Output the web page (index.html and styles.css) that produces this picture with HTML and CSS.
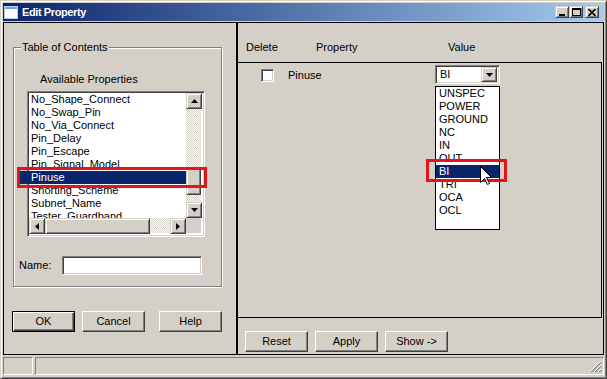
FILE: index.html
```html
<!DOCTYPE html>
<html lang="en">
<head>
    <meta charset="UTF-8">
    <title>Edit Property</title>
    <link rel="stylesheet" href="styles.css">
</head>
<body>
<div class="window">
    <div class="titlebar">
        <svg class="app-icon" width="14" height="13" viewBox="0 0 14 13">
            <rect x="0" y="0" width="14" height="13" fill="#fff"/>
            <rect x="0" y="0" width="14" height="3" fill="#7aa3e0"/>
            <rect x="0.5" y="0.5" width="13" height="12" fill="none" stroke="#b8cdf0"/>
        </svg>
        <span class="title">Edit Property</span>
        <div class="caption-buttons">
            <span class="cap-btn"><svg width="8" height="7" viewBox="0 0 8 7"><rect x="1" y="5" width="6" height="2" fill="#000"/></svg></span>
            <span class="cap-btn"><svg width="9" height="8" viewBox="0 0 9 8"><rect x="0.5" y="0.5" width="8" height="7" fill="none" stroke="#000"/><rect x="0" y="0" width="9" height="2" fill="#000"/></svg></span>
            <span class="cap-btn close"><svg width="8" height="7" viewBox="0 0 8 7"><path d="M0.5 0 L7.5 7 M7.5 0 L0.5 7" stroke="#000" stroke-width="1.6"/></svg></span>
        </div>
    </div>

    <div class="client">
        <div class="pane pane-left">
            <div class="group">
                <span class="group-title">Table of Contents</span>
                <div class="avail-label">Available Properties</div>
                <div class="listbox">
                    <div class="list-items">
                        <div class="item">No_Shape_Connect</div>
                        <div class="item">No_Swap_Pin</div>
                        <div class="item">No_Via_Connect</div>
                        <div class="item">Pin_Delay</div>
                        <div class="item">Pin_Escape</div>
                        <div class="item">Pin_Signal_Model</div>
                        <div class="item selected">Pinuse</div>
                        <div class="item">Shorting_Scheme</div>
                        <div class="item">Subnet_Name</div>
                        <div class="item">Tester_Guardband</div>
                    </div>
                    <div class="vscroll">
                        <span class="sb-btn"><svg width="7" height="4" viewBox="0 0 7 4"><polygon points="0,4 3.5,0 7,4" fill="#000"/></svg></span>
                        <div class="sb-track"><span class="sb-thumb v-thumb"></span></div>
                        <span class="sb-btn"><svg width="7" height="4" viewBox="0 0 7 4"><polygon points="0,0 7,0 3.5,4" fill="#000"/></svg></span>
                    </div>
                    <div class="hscroll">
                        <span class="sb-btn"><svg width="4" height="7" viewBox="0 0 4 7"><polygon points="4,0 4,7 0,3.5" fill="#000"/></svg></span>
                        <div class="sb-track"><span class="sb-thumb h-thumb"></span></div>
                        <span class="sb-btn"><svg width="4" height="7" viewBox="0 0 4 7"><polygon points="0,0 4,3.5 0,7" fill="#000"/></svg></span>
                    </div>
                    <div class="sb-corner"></div>
                    <div class="mark mark-list"></div>
                </div>
                <div class="name-row">
                    <span class="name-label">Name:</span>
                    <span class="textbox"></span>
                </div>
            </div>
            <div class="buttons buttons-left">
                <span class="btn default">OK</span>
                <span class="btn btn-cancel">Cancel</span>
                <span class="btn btn-help">Help</span>
            </div>
        </div>

        <div class="pane pane-right">
            <div class="grid-header">
                <span class="col-delete">Delete</span>
                <span class="col-prop">Property</span>
                <span class="col-value">Value</span>
            </div>
            <div class="grid-body">
                <div class="grid-row">
                    <span class="checkbox"></span>
                    <span class="cell-prop">Pinuse</span>
                    <div class="combo">
                        <span class="combo-text">BI</span>
                        <span class="combo-btn"><svg width="7" height="4" viewBox="0 0 7 4"><polygon points="0,0 7,0 3.5,4" fill="#000"/></svg></span>
                        <div class="droplist">
                            <div class="drop-item">UNSPEC</div>
                            <div class="drop-item">POWER</div>
                            <div class="drop-item">GROUND</div>
                            <div class="drop-item">NC</div>
                            <div class="drop-item">IN</div>
                            <div class="drop-item">OUT</div>
                            <div class="drop-item selected">BI</div>
                            <div class="drop-item">TRI</div>
                            <div class="drop-item">OCA</div>
                            <div class="drop-item">OCL</div>
                            <div class="mark mark-drop"></div>
                            <svg class="cursor" width="12" height="19" viewBox="0 0 12 19">
                                <path d="M0.5 0.5 L0.5 16.5 L4.5 12.5 L7.5 18.5 L9.5 17.5 L6.5 11.5 L11.5 11.5 Z" fill="#fff" stroke="#000"/>
                            </svg>
                        </div>
                    </div>
                </div>
            </div>
            <div class="buttons buttons-right">
                <span class="btn">Reset</span>
                <span class="btn">Apply</span>
                <span class="btn">Show -&gt;</span>
            </div>
        </div>
    </div>

    <div class="statusbar">
        <span class="status-panel first"></span>
        <span class="status-panel main">
            <svg class="grip" width="12" height="12" viewBox="0 0 12 12">
                <path d="M11 1 L1 11 M11 5 L5 11 M11 9 L9 11" stroke="#808080" stroke-width="1.5"/>
                <path d="M11 0 L0 11 M11 4 L4 11 M11 8 L8 11" stroke="#fff"/>
            </svg>
        </span>
    </div>
</div>
</body>
</html>
```

FILE: styles.css
```css
* {
    margin: 0;
    padding: 0;
    box-sizing: border-box;
}
body {
    background: #d4d0c8;
    font-family: "Liberation Sans", Arial, sans-serif;
    font-size: 11px;
    line-height: 13px;
    color: #000;
}
.window {
    width: 607px;
    height: 379px;
    padding: 2px;
    border: 1px solid;
    border-color: #d4d0c8 #404040 #404040 #d4d0c8;
    box-shadow: inset 1px 1px #fff, inset -1px -1px #808080;
    display: flex;
    flex-direction: column;
}

/* raised 3d look shared by small buttons */
.cap-btn,
.sb-btn,
.sb-thumb,
.combo-btn {
    background: #d4d0c8;
    border: 1px solid;
    border-color: #d4d0c8 #404040 #404040 #d4d0c8;
    box-shadow: inset 1px 1px #fff, inset -1px -1px #808080;
    display: flex;
    align-items: center;
    justify-content: center;
}

.titlebar {
    height: 18px;
    display: flex;
    align-items: center;
    background: linear-gradient(to right, #0a246a, #a6caf0);
    color: #fff;
}
.app-icon {
    margin-left: 1px;
}
.title {
    margin-left: 4px;
    font-weight: bold;
    letter-spacing: -0.4px;
}
.caption-buttons {
    margin-left: auto;
    padding-right: 5px;
    display: flex;
}
.cap-btn {
    width: 14px;
    height: 12px;
}
.cap-btn.close {
    margin-left: 2px;
}

.client {
    display: flex;
    height: 333px;
    margin-top: 1px;
}
.pane {
    border: 1px solid #000;
    height: 100%;
}
.pane-left {
    width: 234px;
    padding-top: 24px;
}
.pane-right {
    flex: 1;
}

.group {
    width: 209px;
    height: 240px;
    margin-left: 9px;
    border: 1px solid #808080;
    box-shadow: inset 1px 1px #fff, 1px 1px #fff;
}
.group-title {
    display: block;
    width: max-content;
    margin: -7px 0 0 7px;
    padding: 0 1px;
    background: #d4d0c8;
}
.avail-label {
    margin: 19px 0 0 26px;
}
.listbox {
    position: relative;
    width: 178px;
    height: 146px;
    margin: 5px 0 0 13px;
    background: #fff;
    border: 1px solid;
    border-color: #808080 #fff #fff #808080;
    display: grid;
    grid-template-columns: 158px 16px;
    grid-template-rows: 126px 16px;
}
.listbox::before {
    content: "";
    position: absolute;
    inset: 0;
    box-shadow: inset 1px 1px #404040, inset -1px -1px #d4d0c8;
    pointer-events: none;
}
.list-items {
    margin: 1px 0 0 1px;
    overflow: hidden;
}
.item {
    height: 13px;
    padding-left: 2px;
    white-space: nowrap;
}
.item.selected,
.drop-item.selected {
    background: #0a246a;
    color: #fff;
}
.vscroll {
    margin-top: 1px;
    margin-right: 1px;
    display: flex;
    flex-direction: column;
}
.hscroll {
    margin-left: 1px;
    margin-bottom: 1px;
    display: flex;
}
.sb-btn {
    width: 16px;
    height: 16px;
    flex: none;
}
.sb-track {
    flex: 1;
    background: repeating-conic-gradient(#d4d0c8 0 25%, #fff 0 50%) 0 0 / 2px 2px;
}
.v-thumb {
    height: 27px;
    margin-top: 59px;
}
.h-thumb {
    width: 105px;
    height: 16px;
}
.sb-corner {
    background: #d4d0c8;
    margin: 0 1px 1px 0;
}

.mark {
    position: absolute;
    border: 3px solid #e3151b;
    pointer-events: none;
}
.mark-list {
    left: -11px;
    top: 75px;
    width: 190px;
    height: 21px;
}
.mark-list::before {
    content: "";
    display: block;
    width: 9px;
    height: 13px;
    margin-top: 1px;
    background: #0a246a;
}

.name-row {
    display: flex;
    align-items: center;
    margin-top: 19px;
    height: 19px;
}
.name-label {
    width: 48px;
    padding-left: 5px;
}
.textbox {
    width: 140px;
    height: 19px;
    background: #fff;
    border: 1px solid;
    border-color: #808080 #fff #fff #808080;
    box-shadow: inset 1px 1px #404040, inset -1px -1px #d4d0c8;
}

.buttons {
    display: flex;
}
.buttons-left {
    margin-top: 24px;
    padding-left: 8px;
}
.buttons-right {
    margin-top: 13px;
    padding-left: 7px;
    gap: 7px;
}
.btn {
    width: 63px;
    height: 21px;
    display: flex;
    align-items: center;
    justify-content: center;
    border: 1px solid;
    border-color: #fff #404040 #404040 #fff;
    box-shadow: inset -1px -1px #808080;
}
.btn.default {
    border-color: #000;
    box-shadow: inset 1px 1px #fff, inset -1px -1px #404040, inset -2px -2px #808080;
}
.btn-cancel {
    margin-left: 7px;
}
.btn-help {
    margin-left: 14px;
}

.grid-header {
    height: 39px;
    padding: 18px 0 0 8px;
    display: flex;
}
.col-delete {
    width: 70px;
}
.col-prop {
    width: 132px;
}
.grid-body {
    height: 256px;
    margin-right: 1px;
    border-top: 1px solid #000;
    border-bottom: 1px solid #000;
    border-right: 1px solid #000;
}
.grid-row {
    display: flex;
    align-items: center;
    height: 21px;
    padding-top: 2px;
}
.checkbox {
    width: 13px;
    height: 13px;
    margin-left: 23px;
    margin-top: 1px;
    background: #fff;
    border: 1px solid;
    border-color: #808080 #fff #fff #808080;
    box-shadow: inset 1px 1px #404040, inset -1px -1px #d4d0c8;
}
.cell-prop {
    width: 147px;
    margin-left: 14px;
    margin-top: 2px;
}
.combo {
    position: relative;
    width: 65px;
    height: 19px;
    display: flex;
    align-items: center;
    background: #fff;
    border: 1px solid;
    border-color: #808080 #fff #fff #808080;
    box-shadow: inset 1px 1px #404040, inset -1px -1px #d4d0c8;
    padding: 2px;
}
.combo-text {
    flex: 1;
    padding-left: 2px;
}
.combo-btn {
    width: 16px;
    height: 15px;
}
.droplist {
    position: absolute;
    left: -1px;
    top: 20px;
    width: 65px;
    height: 144px;
    background: #fff;
    border: 1px solid #000;
}
.drop-item {
    height: 13px;
    padding-left: 3px;
}
.mark-drop {
    left: -10px;
    top: 72px;
    width: 81px;
    height: 23px;
}
.cursor {
    position: absolute;
    left: 44px;
    top: 79px;
}

.statusbar {
    display: flex;
    gap: 2px;
    height: 18px;
    margin-top: 2px;
}
.status-panel {
    border: 1px solid;
    border-color: #808080 #fff #fff #808080;
}
.status-panel.first {
    width: 30px;
}
.status-panel.main {
    flex: 1;
    display: flex;
    justify-content: flex-end;
    align-items: flex-end;
}
.grip {
    margin: 0 1px 1px 0;
}
```
